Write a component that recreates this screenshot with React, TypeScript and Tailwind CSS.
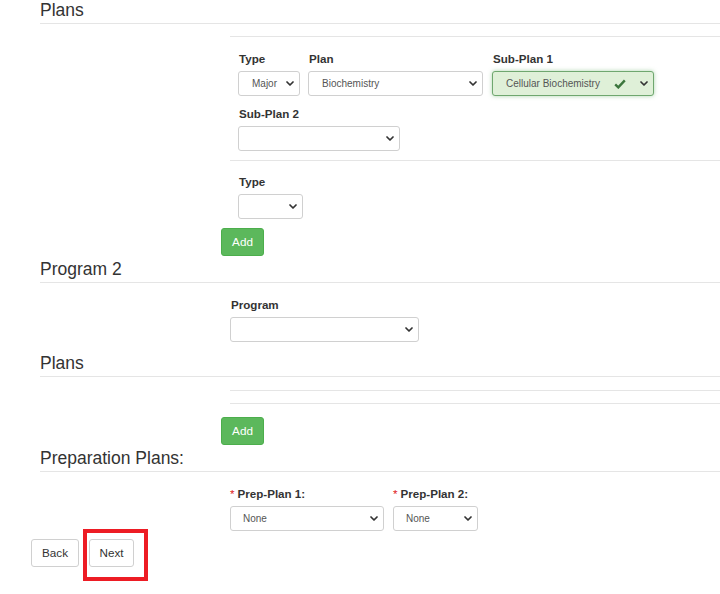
import React from "react";

const Chevron = () => (
  <svg width="8" height="5" viewBox="0 0 8 5" className="shrink-0">
    <path d="M1 1 L4 4 L7 1" fill="none" stroke="#333" strokeWidth="1.7" strokeLinecap="round" strokeLinejoin="round" />
  </svg>
);

const Check = () => (
  <svg width="12" height="10" viewBox="0 0 12 10" className="shrink-0">
    <path d="M1.2 5.4 L4.3 8.4 L10.8 1.4" fill="none" stroke="#3c763d" strokeWidth="2.4" strokeLinejoin="miter" />
  </svg>
);

function Heading({ children, className = "" }: { children: React.ReactNode; className?: string }) {
  return (
    <div className={"h-[24px] leading-[20px] text-[17.5px] text-[#333] border-b border-[#e5e5e5] " + className}>
      {children}
    </div>
  );
}

function Select({ value = "", width, success = false }: { value?: string; width: string; success?: boolean }) {
  return (
    <div
      className={
        "h-[25px] rounded-[3px] border flex items-center pl-[13px] pr-[5px] text-[10px] text-[#555] " +
        width +
        (success
          ? " bg-[#dff0d8] border-[#6fa76f] shadow-[0_0_4px_rgba(103,177,104,0.55)]"
          : " bg-white border-[#d0d0d0]")
      }
    >
      <span className="whitespace-nowrap">{value}</span>
      <span className="ml-auto flex items-center">
        {success && <span className="mr-[14px] flex"><Check /></span>}
        <Chevron />
      </span>
    </div>
  );
}

function Field({ label, children, required = false, className = "" }: { label: string; children: React.ReactNode; required?: boolean; className?: string }) {
  return (
    <div className={className}>
      <div className="h-[14px] leading-[14px] text-[11.6px] font-bold text-[#333] mb-[5px] whitespace-nowrap pl-[1px]">
        {required && <span className="text-[#e02020] font-normal mr-[3px]">*</span>}
        {label}
      </div>
      {children}
    </div>
  );
}

function Btn({ children, variant = "default", className = "" }: { children: React.ReactNode; variant?: "default" | "success"; className?: string }) {
  return (
    <div
      className={
        "h-[28px] rounded-[3px] border flex items-center justify-center text-[11.7px] " +
        (variant === "success" ? "bg-[#5cb85c] border-[#4cae4c] text-white" : "bg-white border-[#d0d0d0] text-[#333]") +
        " " +
        className
      }
    >
      {children}
    </div>
  );
}

export default function App() {
  return (
    <div className="relative w-[720px] h-[594px] overflow-hidden bg-white font-['Liberation_Sans',Arial,sans-serif] text-[#333] pl-[40px]">
      <Heading>Plans</Heading>

      <div className="ml-[190px] mt-[12px] border-t border-[#e5e5e5] pt-[15px] pb-[9px] pl-[8px]">
        <div className="flex">
          <Field label="Type">
            <Select value="Major" width="w-[62px]" />
          </Field>
          <Field label="Plan" className="ml-[8px]">
            <Select value="Biochemistry" width="w-[175px]" />
          </Field>
          <Field label="Sub-Plan 1" className="ml-[9px]">
            <Select value="Cellular Biochemistry" width="w-[162px]" success />
          </Field>
        </div>
        <div className="flex mt-[11px]">
          <Field label="Sub-Plan 2">
            <Select width="w-[162px]" />
          </Field>
        </div>
      </div>

      <div className="ml-[190px] border-t border-[#e5e5e5] pt-[14px] pl-[8px]">
        <Field label="Type">
          <Select width="w-[65px]" />
        </Field>
      </div>

      <Btn variant="success" className="mt-[9px] ml-[181px] w-[43px]">Add</Btn>

      <Heading className="mt-[3px]">Program 2</Heading>

      <div className="ml-[190px] pt-[15px]">
        <Field label="Program">
          <Select width="w-[189px]" />
        </Field>
      </div>

      <Heading className="mt-[11px]">Plans</Heading>

      <div className="ml-[190px] mt-[13px] h-[13px] border-t border-[#e5e5e5]" />
      <div className="ml-[190px] h-[1px] border-t border-[#e5e5e5]" />

      <Btn variant="success" className="mt-[13px] ml-[181px] w-[43px]">Add</Btn>

      <Heading className="mt-[3px]">Preparation Plans:</Heading>

      <div className="ml-[190px] pt-[15px] flex">
        <div>
          <div className="h-[14px] leading-[14px] text-[11.6px] font-bold text-[#333] mb-[5px] whitespace-nowrap">
            <span className="text-[#e02020] font-normal mr-[3px]">*</span>Prep-Plan 1:
          </div>
          <div className="[&>div]:pl-[12px]">
            <Select value="None" width="w-[154px]" />
          </div>
        </div>
        <div className="ml-[9px]">
          <div className="h-[14px] leading-[14px] text-[11.6px] font-bold text-[#333] mb-[5px] whitespace-nowrap">
            <span className="text-[#e02020] font-normal mr-[3px]">*</span>Prep-Plan 2:
          </div>
          <div className="[&>div]:pl-[12px]">
            <Select value="None" width="w-[85px]" />
          </div>
        </div>
      </div>

      <div className="mt-[8px] flex ml-[-9px]">
        <Btn className="w-[48px]">Back</Btn>
        <Btn className="w-[45px] ml-[10px]">Next</Btn>
      </div>

      <div className="absolute left-[83px] top-[529px] w-[65px] h-[52px] border-[4px] border-[#ed1c24]" />
    </div>
  );
}
